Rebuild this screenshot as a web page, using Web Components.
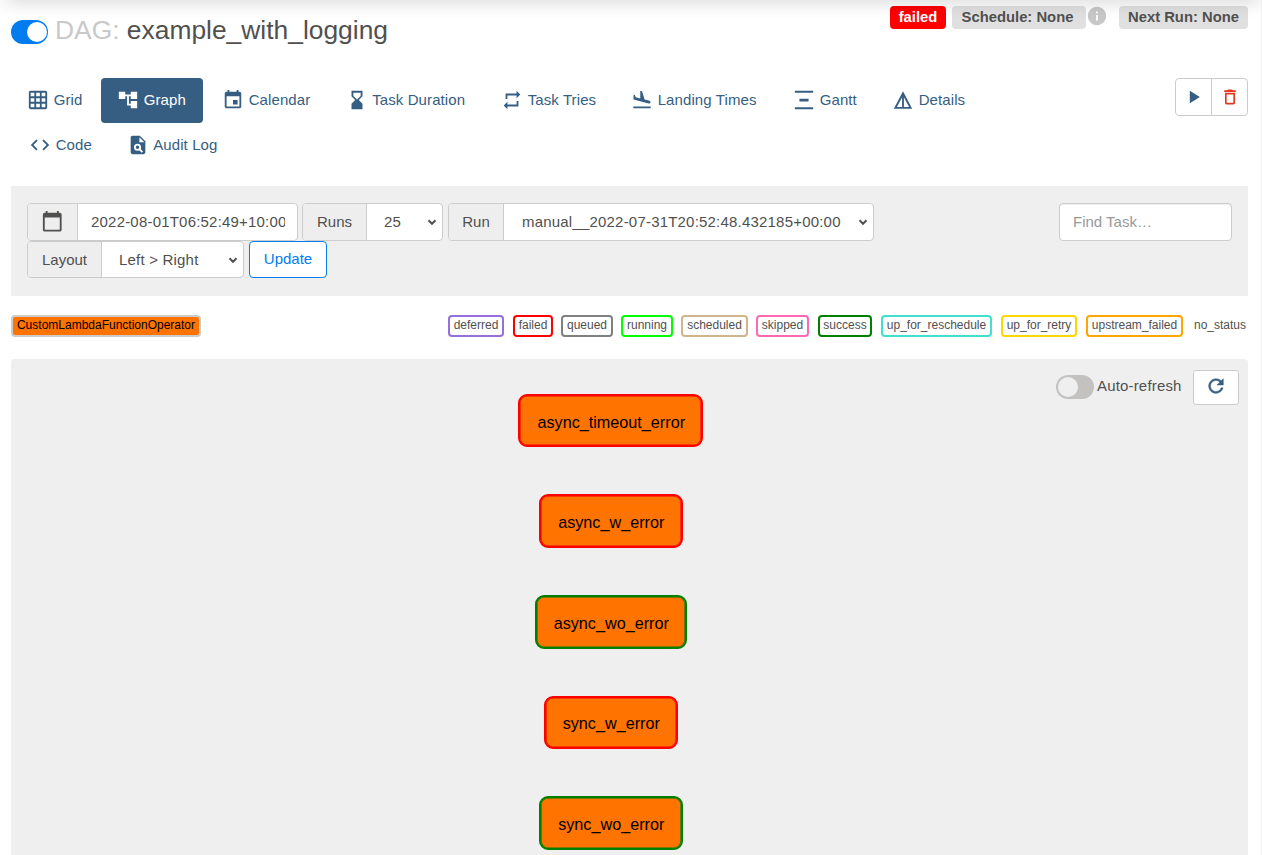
<!DOCTYPE html>
<html lang="en">
<head>
<meta charset="utf-8">
<title>example_with_logging - Graph</title>
<style>
html,body{margin:0;height:100%;overflow:hidden;background:#fff}
body{font-family:"Liberation Sans",Arial,sans-serif;font-size:15px;color:#51504f}
</style>
</head>
<body>
<dag-page></dag-page>
<script>
const ICONS = {
  grid:'<path d="M20 2H4c-1.100 0-2 .9-2 2v16c0 1.100.9 2 2 2h16c1.100 0 2-.9 2-2V4c0-1.100-.9-2-2-2zM8 20H4v-4h4v4zm0-6H4v-4h4v4zm0-6H4V4h4v4zm6 12h-4v-4h4v4zm0-6h-4v-4h4v4zm0-6h-4V4h4v4zm6 12h-4v-4h4v4zm0-6h-4v-4h4v4zm0-6h-4V4h4v4z"/>',
  tree:'<path d="M22 11V3h-7v3H9V3H2v8h7V8h2v10h4v3h7v-8h-7v3h-2V8h2v3z"/>',
  event:'<path d="M17 12h-5v5h5v-5zM16 1v2H8V1H6v2H5c-1.110 0-1.990.9-1.990 2L3 19c0 1.100.89 2 2 2h14c1.100 0 2-.9 2-2V5c0-1.100-.9-2-2-2h-1V1h-2zm3 18H5V8h14v11z"/>',
  hourglass:'<path d="M18 22l-.01-6L14 12l3.990-4.010L18 2H6v6l4 4-4 3.990V22h12zM8 7.500V4h8v3.500l-4 4-4-4z"/>',
  repeat:'<path d="M7 7h10v3l4-4-4-4v3H5v6h2V7zm10 10H7v-3l-4 4 4 4v-3h12v-6h-2v4z"/>',
  landing:'<path d="M2.500 19h19v2h-19zm16.840-3.150c.8.210 1.620-.26 1.840-1.060.21-.8-.26-1.620-1.060-1.840l-5.310-1.420-2.760-9.020L10.120 2v8.280L5.150 8.950l-.93-2.320-1.450-.39v5.170l16.570 4.440z"/>',
  gantt:'<path d="M2 2h20v2H2zM7 10.500h10v3H7zM2 20h20v2H2z"/>',
  details:'<path d="M12 2.500L2 21.500h20L12 2.500zM13 8.900l5.650 10.600H13V8.900zm-2 0v10.600H5.350L11 8.900z"/>',
  code:'<path d="M9.400 16.600L4.800 12l4.600-4.600L8 6l-6 6 6 6 1.400-1.400zm5.200 0l4.600-4.600-4.600-4.600L16 6l6 6-6 6-1.400-1.400z"/>',
  audit:'<path d="M14 2H6c-1.100 0-2 .9-2 2v16c0 1.100.9 2 2 2h12c1.100 0 2-.9 2-2V8l-6-6z"/><path d="M13.500 3.500V9H19z" fill="#fff"/><circle cx="11.500" cy="14.500" r="2.900" fill="none" stroke="#fff" stroke-width="2"/><path d="M13.500 16.500l3.300 3.300" stroke="#fff" stroke-width="2"/>',
  play:'<path d="M7 4.500v15L19 12z"/>',
  trash:'<path d="M6 19c0 1.100.9 2 2 2h8c1.100 0 2-.9 2-2V7H6v12zM8 9h8v10H8V9zm7.500-5l-1-1h-5l-1 1H5v2h14V4h-3.500z"/>',
  date:'<path d="M20 3h-1V1h-2v2H7V1H5v2H4c-1.100 0-2 .9-2 2v16c0 1.100.9 2 2 2h16c1.100 0 2-.9 2-2V5c0-1.100-.9-2-2-2zm0 18H4V8h16v13z"/>',
  refresh:'<path d="M17.650 6.350C16.200 4.900 14.210 4 12 4c-4.420 0-7.990 3.580-7.990 8s3.570 8 7.990 8c3.730 0 6.840-2.550 7.730-6h-2.080c-.82 2.330-3.040 4-5.650 4-3.310 0-6-2.690-6-6s2.690-6 6-6c1.660 0 3.140.69 4.220 1.780L13 11h7V4l-2.350 2.350z" stroke="currentColor" stroke-width=".5"/>',
  chevron:'<path d="M5 8.500l7 7 7-7" fill="none" stroke="currentColor" stroke-width="4"/>',
  info:'<path d="M12 2C6.480 2 2 6.480 2 12s4.480 10 10 10 10-4.480 10-10S17.520 2 12 2zm1 15h-2v-6h2v6zm0-8h-2V7h2v2z"/>'
};
function define(name, html, setup){
  const template = document.createElement('template');
  template.innerHTML = '<style>*{box-sizing:border-box}:host{box-sizing:border-box}</style>' + html;
  customElements.define(name, class extends HTMLElement{
    constructor(){
      super();
      this.attachShadow({mode:'open'}).append(template.content.cloneNode(true));
    }
    connectedCallback(){ if(setup) setup(this, this.shadowRoot); }
  });
}

define('ui-icon', `<style>:host{display:block;flex:none;width:var(--size,22.5px);height:var(--size,22.5px)}svg{display:block;width:100%;height:100%;fill:currentColor}</style><svg viewBox="0 0 24 24"></svg>`,
  (el,root)=>{root.querySelector('svg').innerHTML=ICONS[el.getAttribute('name')]});

define('ui-switch', `<style>:host{display:block;flex:none;width:37px;height:24px;border-radius:12px;background:#c4c2c1;padding:2px}
i{display:block;width:20px;height:20px;border-radius:50%;background:#efefef}
:host([on]){background:#017cee}:host([on]) i{margin-left:13.500px;background:#fff}</style><i></i>`);

define('status-badge', `<style>:host{display:block;height:23px;line-height:22px;border-radius:4px;background:#e0e0e0;font-weight:bold;font-size:14.800px;text-align:center;white-space:nowrap}
:host([failed]){background:#f00;color:#fff}</style><slot></slot>`);

define('nav-tab', `<style>:host{display:flex;height:45px;align-items:center;padding:0 0 2px 16px;color:#355e82;border-radius:4px;white-space:nowrap;gap:4.200px;flex:none;letter-spacing:.1px}
ui-icon{--size:22px;margin:1px .3px 0 .2px}
:host([active]){background:#355e82;color:#fff}</style><ui-icon></ui-icon><span><slot></slot></span>`,
  (el,root)=>{const old=root.querySelector('ui-icon');const icon=document.createElement('ui-icon');icon.setAttribute('name',el.getAttribute('icon'));old.replaceWith(icon)});

define('field-group', `<style>:host{display:flex;height:38px;border:1px solid #ccc;border-radius:4px;overflow:hidden;background:#fff;flex:none}
.label{flex:none;width:var(--label);background:#eee;border-right:1px solid #ccc;display:flex;align-items:center;justify-content:center;padding-bottom:1px}
.value{flex:1;min-width:0;margin-left:var(--indent,13px);margin-right:12px;overflow:hidden;white-space:nowrap;align-self:center;padding-bottom:1px;letter-spacing:.2px}
ui-icon{--size:12px;align-self:center;margin-right:4px;display:none}
:host([select]) ui-icon{display:block}:host([select]) .value{margin-right:0}</style>
<span class="label"><slot name="label"></slot></span><span class="value"><slot></slot></span><ui-icon name="chevron"></ui-icon>`);

define('search-field', `<style>:host{display:block;width:173px;height:38px;border:1px solid #ccc;border-radius:4px;background:#fff;box-shadow:inset 0 1px 1px rgba(0,0,0,.075);padding:0 13px;line-height:36px;color:#999}</style><slot></slot>`);

define('state-tag', `<style>:host{display:block;flex:none;height:22px;border:2px solid var(--c,transparent);border-radius:4px;background:var(--fill,#fff);font-size:12px;line-height:16px;text-align:center;white-space:nowrap}</style><slot></slot>`);

define('task-node', `<style>:host{display:flex;flex:none;align-items:center;justify-content:center;height:53.600px;border:2px solid var(--c);box-shadow:inset 0 0 0 .6px var(--c);border-radius:9px;background:#ff7300;color:#000;font-size:16.200px;padding:3px 0 0 1px}
:host([state=failed]){--c:#f00}:host([state=success]){--c:#008000}</style><slot></slot>`);

define('dag-header', `<style>:host{display:flex;justify-content:space-between;height:78px}
.title{display:flex;height:24px;margin-top:20px;gap:7px;align-items:center}
h1{margin:0;font-size:26.400px;font-weight:normal;line-height:30px;position:relative;top:-2px;white-space:nowrap}
h1 span{color:#c9c9c9}
.badges{display:flex;margin-top:6px}
ui-icon{--size:22px;color:#c8c8c8;margin:-1px 11px 0 0}
</style><div class="title"><ui-switch on></ui-switch><h1><span>DAG:</span> example_with_logging</h1></div>
<div class="badges"><status-badge failed style="width:56px;margin-right:6px">failed</status-badge><status-badge style="width:134px;padding-right:3px">Schedule: None</status-badge><ui-icon name="info"></ui-icon><status-badge style="width:129px">Next Run: None</status-badge></div>`);

define('dag-nav', `<style>:host{display:flex;justify-content:space-between;height:108px}
.row{display:flex}
.actions{display:flex;width:73px;height:38px;border:1px solid #ccc;border-radius:4px}
.actions span{flex:1;display:flex;align-items:center;justify-content:center;color:#355e82}
.actions span+span{border-left:1px solid #ccc;color:#e43921}
ui-icon{--size:20px}
</style><div><div class="row">
<nav-tab icon="grid" style="width:90px">Grid</nav-tab>
<nav-tab icon="tree" active style="width:102px;margin-right:3px">Graph</nav-tab>
<nav-tab icon="event" style="width:123.500px">Calendar</nav-tab>
<nav-tab icon="hourglass" style="width:155.500px">Task Duration</nav-tab>
<nav-tab icon="repeat" style="width:130px">Task Tries</nav-tab>
<nav-tab icon="landing" style="width:162px">Landing Times</nav-tab>
<nav-tab icon="gantt" style="width:99px">Gantt</nav-tab>
<nav-tab icon="details" style="width:110px">Details</nav-tab></div>
<div class="row"><nav-tab icon="code" style="width:97.500px;margin-left:2px">Code</nav-tab><nav-tab icon="audit">Audit Log</nav-tab></div></div>
<div class="actions"><span><ui-icon name="play" style="margin-left:1px"></ui-icon></span><span><ui-icon name="trash"></ui-icon></span></div>`);

define('dag-filters', `<style>:host{display:flex;justify-content:space-between;height:110px;background:#efefef;padding:17px 16px 0}
.row{display:flex}
.update{height:37px;width:78px;border:1px solid #017cee;border-radius:4px;background:#fff;color:#017cee;font:inherit;padding:0 0 2px}
</style><div><div class="row">
<field-group style="width:271px;--label:50px;margin-right:4px"><ui-icon slot="label" name="date"></ui-icon>2022-08-01T06:52:49+10:00</field-group>
<field-group select style="width:141px;--label:64px;--indent:17px;margin-right:5px"><span slot="label">Runs</span>25</field-group>
<field-group select style="width:426px;--label:55px;--indent:18px"><span slot="label">Run</span>manual__2022-07-31T20:52:48.432185+00:00</field-group></div>
<div class="row"><field-group select style="width:217px;height:37px;--label:74px;--indent:17px;margin-right:5px"><span slot="label">Layout</span>Left &gt; Right</field-group><button class="update">Update</button></div></div>
<search-field>Find Task…</search-field>`);

define('dag-legend', `<style>:host{display:flex;justify-content:space-between;margin-top:19px;height:22px}
div{display:flex}
</style><state-tag style="width:190px;--c:#ccc;--fill:#ff7300;color:#000">CustomLambdaFunctionOperator</state-tag><div class="states"></div>`,
(el,root)=>{
  const states=[['deferred','mediumpurple',56,9],['failed','red',40,8],['queued','gray',52,8],['running','lime',52,8],['scheduled','tan',67,8],['skipped','hotpink',53,9],['success','green',54,9],['up_for_reschedule','turquoise',111,9],['up_for_retry','gold',76,9],['upstream_failed','orange',97,9],['no_status','transparent',54,2]];
  root.querySelector('.states').innerHTML=states.map(([n,c,w,m])=>`<state-tag style="--c:${c};width:${w}px;margin-right:${m}px">${n}</state-tag>`).join('');
});

define('dag-graph', `<style>:host{display:block;margin-top:22px;height:520px;background:#efefef;border-radius:4px;position:relative}
.nodes{display:flex;flex-direction:column;align-items:center;gap:47px;padding-top:34.900px;width:1199.500px}
.tools{position:absolute;right:9px;top:11px;display:flex}
ui-switch{margin:5px 3px 0 0;width:38px}
.txt{line-height:32px;width:96px;letter-spacing:.17px}
.btn{width:46px;height:35px;border:1px solid #ccc;border-radius:3px;background:#fff;color:#355e82;display:flex;align-items:center;justify-content:center;padding-bottom:3px}
.btn ui-icon{--size:22px}
</style><div class="nodes">
<task-node state="failed" style="width:185px">async_timeout_error</task-node>
<task-node state="failed" style="width:143.500px">async_w_error</task-node>
<task-node state="success" style="width:152.500px">async_wo_error</task-node>
<task-node state="failed" style="width:134.500px">sync_w_error</task-node>
<task-node state="success" style="width:143.500px">sync_wo_error</task-node></div>
<div class="tools"><ui-switch></ui-switch><span class="txt">Auto-refresh</span><span class="btn"><ui-icon name="refresh"></ui-icon></span></div>`);

define('dag-page', `<style>:host{display:block;width:1262px;height:855px;overflow:hidden;position:relative;padding:0 13px 0 11px;border-right:1px solid #efefef}
.shade{position:absolute;left:8px;right:4px;top:-10px;height:10px;box-shadow:0 0 18px 2px rgba(0,0,0,.18)}
</style><div class="shade"></div><dag-header></dag-header><dag-nav></dag-nav><dag-filters></dag-filters><dag-legend></dag-legend><dag-graph></dag-graph>`);
</script>
</body>
</html>
